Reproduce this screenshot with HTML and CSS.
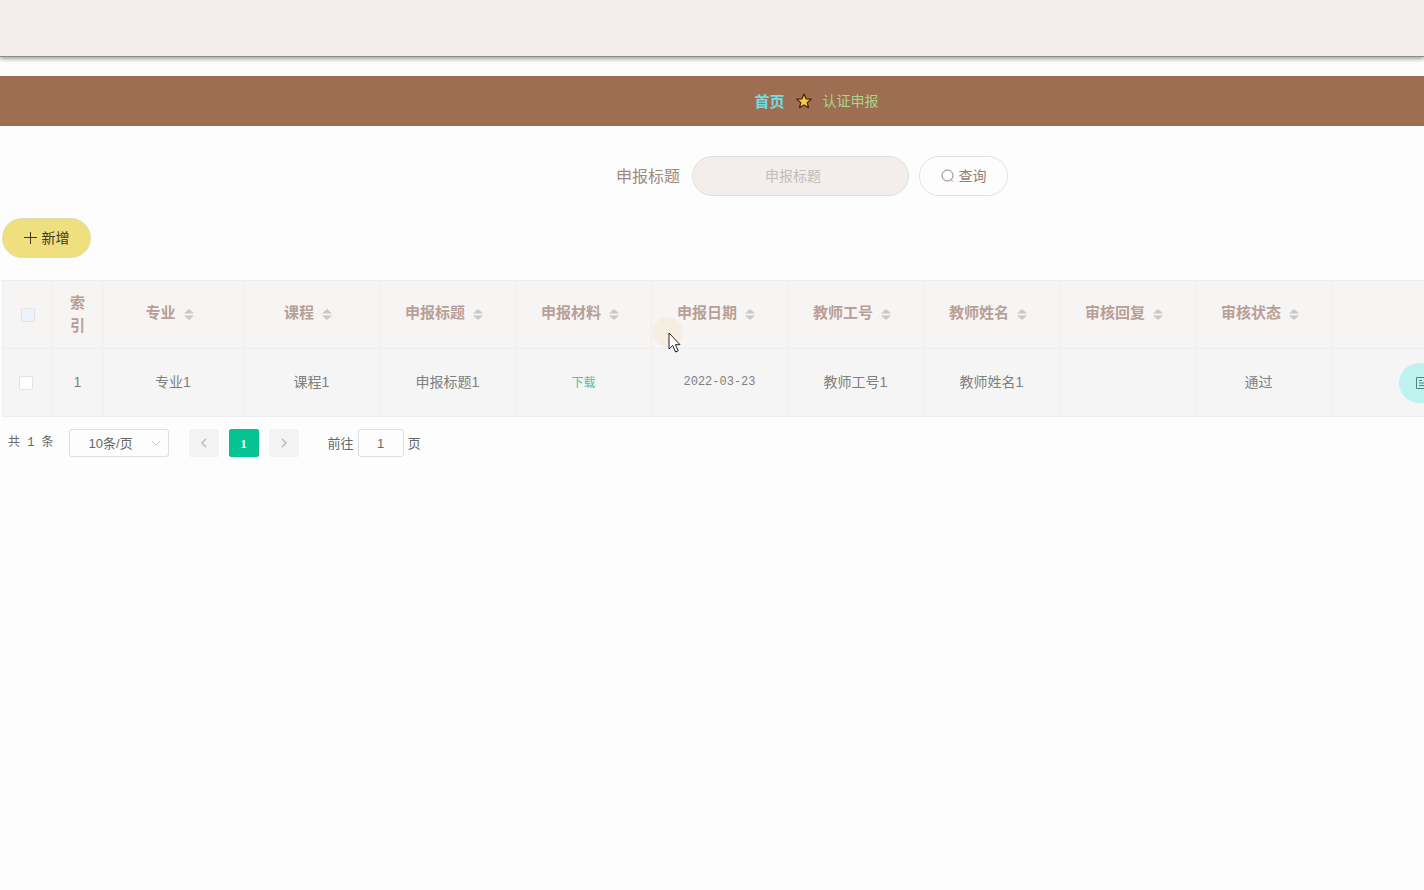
FILE: index.html
```html
<!DOCTYPE html>
<html lang="zh-CN">
<head>
<meta charset="utf-8">
<title>认证申报</title>
<link rel="stylesheet" href="styles.css">
</head>
<body>
<svg class="sprite" aria-hidden="true">
  <symbol id="sort" viewBox="0 0 10 12"><path d="M5 1 10 5.500H0zM5 12 0 7.500h10z" fill="currentColor"/></symbol>
</svg>
<header class="topbar"></header>
<main class="page">
  <nav class="crumbs" aria-label="breadcrumb">
    <a class="crumb-home" href="#">首页</a>
    <svg class="star" viewBox="0 0 16 16"><path d="M8 1l2 4.800 5.200.4-4 3.400 1.300 5.100L8 12l-4.500 2.700 1.300-5.100-4-3.400L6 5.800z" fill="#ffc83d" stroke="#40250f" stroke-width="1.200" stroke-linejoin="round"/></svg>
    <span class="crumb-current">认证申报</span>
  </nav>
  <form class="search">
    <label for="title">申报标题</label>
    <input id="title" class="search-input" type="text" placeholder="申报标题">
    <button class="btn" type="button"><svg class="icon" viewBox="0 0 14 14" fill="none" stroke="currentColor"><circle cx="6.500" cy="6.500" r="5.500"/><path d="M10 10.500 12 12.500"/></svg>查询</button>
  </form>
  <div class="actions">
    <button class="btn btn-add" type="button"><svg class="icon" viewBox="0 0 14 14" fill="none" stroke="currentColor"><path d="M6.500 1v12M0 6.500h13"/></svg>新增</button>
  </div>
  <table class="grid">
    <colgroup><col class="c-small"><col class="c-small"><col class="c-major"><col class="c-mid"><col class="c-mid"><col class="c-mid"><col class="c-mid"><col class="c-mid"><col class="c-mid"><col class="c-mid"><col class="c-mid"><col></colgroup>
    <thead>
      <tr>
        <th><input class="check check-all" type="checkbox" aria-label="全选"></th>
        <th>索<br>引</th>
        <th class="sortable">专业<svg class="sort"><use href="#sort"/></svg></th>
        <th class="sortable">课程<svg class="sort"><use href="#sort"/></svg></th>
        <th class="sortable">申报标题<svg class="sort"><use href="#sort"/></svg></th>
        <th class="sortable">申报材料<svg class="sort"><use href="#sort"/></svg></th>
        <th class="sortable">申报日期<svg class="sort"><use href="#sort"/></svg></th>
        <th class="sortable">教师工号<svg class="sort"><use href="#sort"/></svg></th>
        <th class="sortable">教师姓名<svg class="sort"><use href="#sort"/></svg></th>
        <th class="sortable">审核回复<svg class="sort"><use href="#sort"/></svg></th>
        <th class="sortable">审核状态<svg class="sort"><use href="#sort"/></svg></th>
        <th></th>
      </tr>
    </thead>
    <tbody>
      <tr>
        <td class="pick"><input class="check" type="checkbox" aria-label="选择"></td>
        <td>1</td>
        <td>专业1</td>
        <td>课程1</td>
        <td>申报标题1</td>
        <td><a class="download" href="#">下载</a></td>
        <td class="date">2022-03-23</td>
        <td>教师工号1</td>
        <td>教师姓名1</td>
        <td></td>
        <td class="status">通过</td>
        <td class="ops"><button class="btn btn-detail" type="button" aria-label="查看"><svg class="icon" viewBox="0 0 14 14" fill="none" stroke="currentColor"><path d="M1.500 1.500h11v11h-11zM4 4.500h3M4 7h6M4 9.500h6"/></svg></button></td>
      </tr>
    </tbody>
  </table>
  <div class="pager">
    <span class="total">共 1 条</span>
    <span class="size">
      <select aria-label="每页条数"><option>10条/页</option></select>
      <svg class="chevron" viewBox="0 0 10 10" fill="none" stroke="currentColor"><path d="M1 3l4 4 4-4"/></svg>
    </span>
    <div class="pages">
      <button type="button" aria-label="上一页"><svg viewBox="0 0 10 10" fill="none" stroke="currentColor" stroke-width="1.500"><path d="M7 1 3 5l4 4"/></svg></button>
      <button class="active" type="button">1</button>
      <button type="button" aria-label="下一页"><svg viewBox="0 0 10 10" fill="none" stroke="currentColor" stroke-width="1.500"><path d="M3 1l4 4-4 4"/></svg></button>
    </div>
    <div class="jump"><label for="goto">前往</label><input id="goto" type="text" value="1"><span>页</span></div>
  </div>
</main>
<div class="pointer" aria-hidden="true">
  <svg viewBox="0 0 14 21"><path d="M1 1v16l3.700-3.500L7.500 20l2.700-1.200-2.800-6.100H12z" fill="#fff" stroke="#222"/></svg>
</div>
</body>
</html>
```
FILE: styles.css
```css
* { box-sizing: border-box; }
html { overflow: hidden; }
body {
  margin: 0;
  min-height: 100vh;
  overflow: hidden;
  position: relative;
  background: #fdfdfd;
  color: #808080;
  font: 14px/23px "Liberation Sans", "Noto Sans CJK SC", sans-serif;
}
button, input, select { font: inherit; color: inherit; margin: 0; }
a { text-decoration: none; }
.sprite { display: none; }
.topbar {
  height: 57px;
  background: #f3edec;
  border-bottom: 1px solid #928b8b;
  box-shadow: 0 2px 4px #aaa0a0;
}
.page { width: calc(100% + 206px); padding-top: 19px; }

.crumbs {
  display: flex;
  align-items: center;
  justify-content: center;
  gap: 11px;
  height: 50px;
  background: #9e6e52;
  border-bottom: 3px solid #9f6952;
  padding-top: 3px;
  padding-left: 3px;
}
.crumb-home { color: #72dce2; font-size: 15px; font-weight: 700; }
.crumb-current { color: #a7d786; }
.star { width: 16px; height: 16px; }

.search {
  display: flex;
  align-items: center;
  justify-content: center;
  margin-top: 30px;
  padding-right: 6px;
}
.search label { margin-right: 12px; font-size: 16px; color: #a08a7b; }
.search-input {
  width: 217px;
  height: 40px;
  margin-right: 10px;
  padding: 0 30px 0 15px;
  border: 1px solid #dde0e2;
  border-radius: 20px;
  background: #f3edec;
  text-align: center;
}
.search-input::placeholder { color: #c3bcbc; opacity: 1; }
.btn {
  display: inline-flex;
  align-items: center;
  justify-content: center;
  gap: 4px;
  width: 89px;
  height: 40px;
  padding: 0;
  border: 1px solid #dfe2e4;
  border-radius: 20px;
  background: #fdfdfd;
  color: #967e72;
}
.icon { width: 14px; height: 14px; }
.actions { display: flex; margin: 22px 2px; }
.btn-add { background: #efdf7f; border-color: #e0dfb4; color: #40391f; }

.grid {
  width: calc(100% - 2px);
  margin-left: 2px;
  table-layout: fixed;
  border-collapse: collapse;
  background: #f5f5f5;
}
.c-small { width: 50px; }
.c-major { width: 141px; }
.c-mid { width: 136px; }
.grid th, .grid td {
  height: 68px;
  padding: 0;
  border: 1px solid #eeeeef;
  text-align: center;
}
.grid th {
  padding-bottom: 2px;
  background: #f7f5f4;
  color: #b89f97;
  font-size: 15px;
}
.grid .sortable { padding: 0 7px 5px 0; }
.grid .pick { padding-right: 4px; }
.grid .status { padding-right: 10px; }
.sort { width: 10px; height: 12px; margin-left: 8px; vertical-align: -2px; color: #c8c8c8; }
.check {
  appearance: none;
  width: 14px;
  height: 14px;
  border: 1px solid #e3e4e7;
  border-radius: 2px;
  background: #fff;
  vertical-align: middle;
}
.check-all { background: #edf2fc; }
.download { color: #4cc4a0; font-size: 12px; }
.grid .date { font-family: "Liberation Mono", monospace; font-size: 12px; }
.grid .ops { text-align: left; padding-left: 67px; }
.btn-detail { background: #bff3f0; border-color: #bff3f0; color: #56827f; justify-content: flex-start; padding-left: 15px; }
.ops .btn { vertical-align: middle; }

.pager {
  display: flex;
  align-items: center;
  margin-top: 12px;
  padding-left: 8px;
  color: #666;
  font-size: 13px;
}
.total { margin-right: 15px; font-family: "Liberation Mono", "Noto Sans CJK SC", monospace; font-size: 12px; }
.size { position: relative; margin-right: 20px; display: flex; }
.size select {
  appearance: none;
  width: 100px;
  height: 28px;
  padding: 0 16px 0 19px;
  border: 1px solid #dcdee2;
  border-radius: 3px;
  background: #fdfdfd;
}
.chevron { position: absolute; right: 8px; top: 9px; width: 10px; height: 10px; color: #c0c4cc; }
.pages { display: flex; gap: 10px; margin-right: 29px; }
.pages button {
  display: flex;
  align-items: center;
  justify-content: center;
  width: 30px;
  height: 28px;
  padding: 0;
  border: 0;
  border-radius: 2px;
  background: #f4f3f4;
  color: #bbb;
}
.pages svg { width: 10px; height: 10px; }
.pages .active { background: #06c290; color: #fff; font-family: "Liberation Serif", serif; font-weight: 700; }
.jump { display: flex; align-items: center; gap: 4px; }
.jump input {
  width: 46px;
  height: 28px;
  padding: 0;
  border: 1px solid #dcdee2;
  border-radius: 3px;
  background: #fdfdfd;
  text-align: center;
}

.pointer {
  position: absolute;
  left: 653px;
  top: 317px;
  width: 30px;
  height: 30px;
  border-radius: 50%;
  background: #f7eee2;
}
.pointer svg { position: absolute; left: 15px; top: 15px; width: 14px; height: 21px; }
```
